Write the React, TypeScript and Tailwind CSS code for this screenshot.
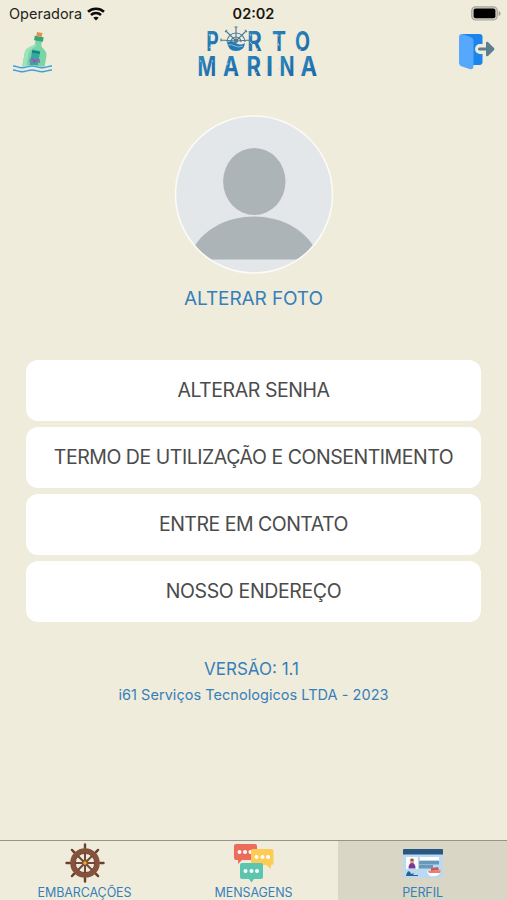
import React from 'react';

const MENU_ITEMS = [
    { id: 'senha', label: 'ALTERAR SENHA', spacing: 'tracking-[-0.43px]' },
    { id: 'termo', label: 'TERMO DE UTILIZAÇÃO E CONSENTIMENTO', spacing: 'tracking-[-0.46px]' },
    { id: 'contato', label: 'ENTRE EM CONTATO', spacing: 'tracking-[-0.5px]' },
    { id: 'endereco', label: 'NOSSO ENDEREÇO', spacing: 'tracking-[-0.36px]' },
];

const LOGO_LETTERS = [
    { char: 'P', x: 9.2, y: 26, width: 12.5 },
    { char: 'R', x: 50.2, y: 26, width: 14.5 },
    { char: 'T', x: 75, y: 26, width: 14 },
    { char: 'O', x: 98, y: 26, width: 15 },
    { char: 'M', x: 0.4, y: 51, width: 18.6 },
    { char: 'A', x: 26, y: 51, width: 16 },
    { char: 'R', x: 49.4, y: 51, width: 14.5 },
    { char: 'I', x: 69, y: 51, width: 7 },
    { char: 'N', x: 82.6, y: 51, width: 15 },
    { char: 'A', x: 103.4, y: 51, width: 16.6 },
];

const SPOKES = [0, 45, 90, 135, 180, 225, 270, 315];

const WifiIcon = () => (
    <svg width="18" height="14" viewBox="0 0 18 14" fill="none" stroke="#0b0b0b" strokeWidth="2.6">
        <path d="M1 4.8C5.4 .8 12.6 .8 17 4.8" />
        <path d="M4 8C6.8 5.4 11.2 5.4 14 8" />
        <path d="M9 13.6 6.3 10.8C7.8 9.4 10.2 9.4 11.7 10.8Z" fill="#0b0b0b" stroke="none" />
    </svg>
);

const BatteryIcon = () => (
    <svg width="31" height="15" viewBox="0 0 31 15">
        <rect x=".7" y=".8" width="25.6" height="13.2" rx="4" fill="#d5d1c1" stroke="#aaa698" strokeWidth="1.2" />
        <rect x="2.6" y="2.6" width="21.8" height="9.6" rx="2" fill="#000" />
        <path d="M27.7 5v5c2.4-.7 2.4-4.3 0-5Z" fill="#9a978c" />
    </svg>
);

const BottleIcon = () => (
    <svg width="40" height="41" viewBox="0 0 40 41">
        <g transform="rotate(10 22 20)">
            <path d="M20.5 5h6.5v7c0 3 7 4 7 10v16H12V22c0-6 8.500-7 8.500-10Z" fill="#78d5a5" />
            <path d="M20.500 12c0 3-8.500 4-8.500 10v15h4V22c0-5 6-5 6-10Z" fill="#9be3bb" />
            <path d="M19 4h9v4.500h-9Z" fill="#38a577" />
            <path d="M20.5 0h5.5v4h-5.5Z" fill="#dc9355" />
            <path d="M19 18h8v17h-8Z" fill="#32a99a" />
            <path d="M19 19h8v2h-8Z" fill="#167b81" />
            <path d="m18 27 10-1 1 4-11 1Z" fill="#7783b6" />
            <path d="m21 27 2 3 3-3" fill="none" stroke="#8c5aa4" strokeWidth="1.5" />
        </g>
        <path d="M0 33c4 0 5 1.5 9 1.5s5-1.5 10-1.5 6 1.5 10 1.5 6-1.5 10-1.5v7H0Z" fill="#e4eee9" />
        <path d="M0 34c4 0 5 1.7 9 1.7s6-1.7 10-1.7 6 1.7 10 1.7 6-1.7 10-1.7M0 38c4 0 5 1.7 9 1.7s6-1.7 10-1.7 6 1.7 10 1.7 6-1.7 10-1.7" fill="none" stroke="#479cc9" strokeWidth="1.5" />
    </svg>
);

const Logo = () => (
    <svg width="122" height="62" viewBox="0 0 122 62" role="img" aria-label="Porto Marina">
        <defs>
            <linearGradient id="sea" x1="0" y1="0" x2="1" y2="1">
                <stop offset="0" stopColor="#2e91c2" />
                <stop offset="1" stopColor="#1b5ea3" />
            </linearGradient>
        </defs>
        <g fill="url(#sea)" fontFamily="Inter, sans-serif" fontWeight="700" fontSize="27">
            {LOGO_LETTERS.map((letter, index) => (
                <text key={index} x={letter.x} y={letter.y} textLength={letter.width} lengthAdjust="spacingAndGlyphs">
                    {letter.char}
                </text>
            ))}
        </g>
        {/* Worn print flecks */}
        <path d="m12 9 1 2m3 5 2-1m-6 7 2 1m39-14 1 2m-1 6 2 2m5 4 1 2m19-15 2 1m-1 7 1 3m18-11-1 2m9 5 1 2m-7 6 2-1M3 35l1 2m1 6 1 2m9-10 1 2m15 1-1 2m7 6 1 2m11-10 1 2m9 7 1 1m9-12 1 2m-1 8 1 2m11-14 1 1m0 8 1 2m9-9 1 2m15-2-1 2m-4 7 1 2m9-1 1 1" stroke="#c6dddf" strokeWidth=".8" />
        {/* Helm rising over the water */}
        <g transform="translate(39 16)" stroke="#477a96" fill="none">
            <path d="M-9 1A9 9 0 0 1 9 1M-5 1A5 5 0 0 1 5 1" strokeWidth="1.1" />
            <path d="M0 0V-14M0 0-10-10M0 0 10-10M0 0-15-1M0 0 15-1M-1.500-14h3M-11-9l2-2M11-9l-2-2M-15-2.500v3M15-2.500v3" strokeWidth="1.1" />
            <path d="M-9 1Q-4-1 0 2t9 0Q8 10 0 10T-9 1Z" fill="#237ab2" stroke="none" />
            <path d="M-8 4q4-1 7 1t8 0" stroke="#9acbd9" strokeWidth=".9" />
            <circle r="2" fill="#4c7e96" stroke="none" />
        </g>
    </svg>
);

const ExitIcon = () => (
    <svg width="36" height="36" viewBox="0 0 36 36">
        <path d="M3 0h17.500q3 0 3 3v25q0 3-3 3H7Z" fill="#1c84ed" />
        <path d="M3 0 11.500 3q3 1 3 4v25q0 4-4 3L3 32.500q-3-1-3-4V3Q0 0 3 0Z" fill="#55a8fb" />
        <path d="M24 10h-3a5 5 0 0 0 0 10h3Z" fill="#f0ecdb" />
        <path d="M20.500 13.500H27V9q0-2 2-1l6 6q1 1 0 2l-6 6q-2 1-2-1v-4.500h-6.500q-1.500 0-1.500-1.500t1.500-1.500Z" fill="#5c7e91" />
    </svg>
);

const Avatar = () => (
    <svg width="160" height="160" viewBox="0 0 160 160">
        <defs>
            <clipPath id="photo">
                <circle cx="80" cy="79.500" r="78" />
            </clipPath>
        </defs>
        <circle cx="80" cy="79.500" r="78.3" fill="#e4e7ea" />
        <g fill="#acb4b7" clipPath="url(#photo)">
            <ellipse cx="80.300" cy="66.500" rx="31.2" ry="33.6" />
            <path d="M14 144.500C33 87 127 87 146 144.500Z" />
        </g>
        <circle cx="80" cy="79.500" r="78.5" fill="none" stroke="#fbfbf7" strokeWidth="1.5" />
    </svg>
);

const HelmIcon = () => (
    <svg width="40" height="40" viewBox="-20 -20 40 40" fill="none">
        {SPOKES.map((angle) => (
            <g key={angle} transform={`rotate(${angle})`}>
                <path d="M0 0V-17" stroke="#704738" strokeWidth="2" />
                <path d="M0-15.5V-18.5" stroke="#66432f" strokeWidth="2.4" strokeLinecap="round" />
            </g>
        ))}
        <circle r="12.3" stroke="#87523a" strokeWidth="5" />
        <circle r="9.7" stroke="#704537" strokeWidth="1" />
        <circle r="3.4" fill="#805038" />
        <circle r="1.7" fill="#e9b51c" />
    </svg>
);

const ChatIcon = () => (
    <svg width="40" height="39" viewBox="0 0 40 39">
        <path d="M2 0h19q2 0 2 2v12q0 2-2 2H8l-4 4v-4H2q-2 0-2-2V2Q0 0 2 0Z" fill="#ed6b5b" />
        <g fill="#fff"><circle cx="5.5" cy="8" r="2" /><circle cx="11" cy="8" r="2" /><circle cx="16.5" cy="8" r="2" /></g>
        <path d="M19 5h18.500q2 0 2 2v12q0 2-2 2H37v4l-5-4H19q-2 0-2-2V7q0-2 2-2Z" fill="#fdcc57" />
        <g fill="#fff"><circle cx="22.500" cy="13" r="2" /><circle cx="28.500" cy="13" r="2" /><circle cx="34" cy="13" r="2" /></g>
        <path d="M8 19h19q2 0 2 2v12q0 2-2 2h-7l-2.500 3.500L15 35H8q-2 0-2-2V21q0-2 2-2Z" fill="#5bc5b0" />
        <g fill="#fff"><circle cx="11.500" cy="27" r="2" /><circle cx="17.500" cy="27" r="2" /><circle cx="23" cy="27" r="2" /></g>
    </svg>
);

const LicenseIcon = () => (
    <svg width="40" height="29" viewBox="0 0 40 29">
        <rect y="2" width="40" height="27" rx="1.5" fill="#bbd9f1" />
        <path d="M1 0h38q1 0 1 1v4.500H0V1q0-1 1-1Z" fill="#285782" />
        <path d="M3 8h12v12H3Z" fill="#f8fafb" />
        <circle cx="9" cy="12.500" r="2" fill="#e99b65" />
        <path d="M7.200 11.500q0-3 3.3-1.5v2Z" fill="#904b38" />
        <path d="M5.500 19.500q0-5.500 3.5-5.500t3.5 5.500Z" fill="#763b96" />
        <path d="M17 8h19v3H17Z" fill="#fff" />
        <path d="M16 12h20v3.500H16ZM16 16h14v3.500H16Z" fill="#6a99b7" />
        <path d="M3 27c1-6 4-6 5-2l3-1-1 2h5v1Z" fill="#27648c" />
        <path d="m24 22 14-1c-1 4-3 6-7 6-4 1-6-1-7-5Z" fill="#fff" />
        <path d="m25 22 13-1-1 3H26Z" fill="#ef7d69" />
        <path d="m28 19 7-1 1 3-8 1Z" fill="#bd5f63" />
    </svg>
);

const TABS = [
    { id: 'boats', label: 'EMBARCAÇÕES', icon: <HelmIcon />, style: '' },
    { id: 'messages', label: 'MENSAGENS', icon: <ChatIcon />, style: '' },
    { id: 'profile', label: 'PERFIL', icon: <LicenseIcon />, style: 'bg-[#dad6c5]' },
];

export default function App() {
    return (
        <div className="flex h-[900px] w-full flex-col overflow-hidden bg-[#f0ecdb] font-['Inter',sans-serif] text-[#367fba]">
            <div className="grid h-7 shrink-0 grid-cols-3 text-black">
                <div className="flex items-center gap-[5px] pl-[9px] text-[14.5px] text-[#242420]">
                    <span>Operadora</span>
                    <WifiIcon />
                </div>
                <div className="pt-[3px] text-center text-[14.5px] font-semibold text-[#171714]">02:02</div>
                <div className="flex justify-end pr-[5px] pt-[6px]">
                    <BatteryIcon />
                </div>
            </div>

            <header className="flex h-[87px] shrink-0 items-start justify-between pl-[13px] pr-[12px]">
                <div className="pt-1"><BottleIcon /></div>
                <div className="-mt-[3px] pl-[3px]"><Logo /></div>
                <div className="pt-[6px]"><ExitIcon /></div>
            </header>

            <section className="flex h-[245px] shrink-0 flex-col items-center">
                <Avatar />
                <button className="mt-[9px] text-[19px] leading-[30px] tracking-[-0.1px]">ALTERAR FOTO</button>
            </section>

            <nav className="flex shrink-0 flex-col gap-[6.5px] px-[26px]">
                {MENU_ITEMS.map((item) => (
                    <button key={item.id} className={`h-[60.6px] rounded-[12px] bg-[#fefffe] text-[19.5px] text-[#4b4b4b] ${item.spacing}`}>
                        {item.label}
                    </button>
                ))}
            </nav>

            <section className="mt-[34px] flex flex-1 flex-col items-center">
                <p className="-ml-1 text-[17px] leading-[26px]">VERSÃO: 1.1</p>
                <p className="text-[14.5px] leading-[26px] tracking-[0.04px]">i61 Serviços Tecnologicos LTDA - 2023</p>
            </section>

            <footer className="grid h-[60px] shrink-0 grid-cols-3 border-t border-[#96938a]">
                {TABS.map((tab) => (
                    <button key={tab.id} className={`flex flex-col items-center pt-[2px] ${tab.style}`}>
                        <span className="flex h-10 items-center">{tab.icon}</span>
                        <span className="mt-[1px] text-[12.5px] leading-[18px] tracking-[-0.1px]">{tab.label}</span>
                    </button>
                ))}
            </footer>
        </div>
    );
}
